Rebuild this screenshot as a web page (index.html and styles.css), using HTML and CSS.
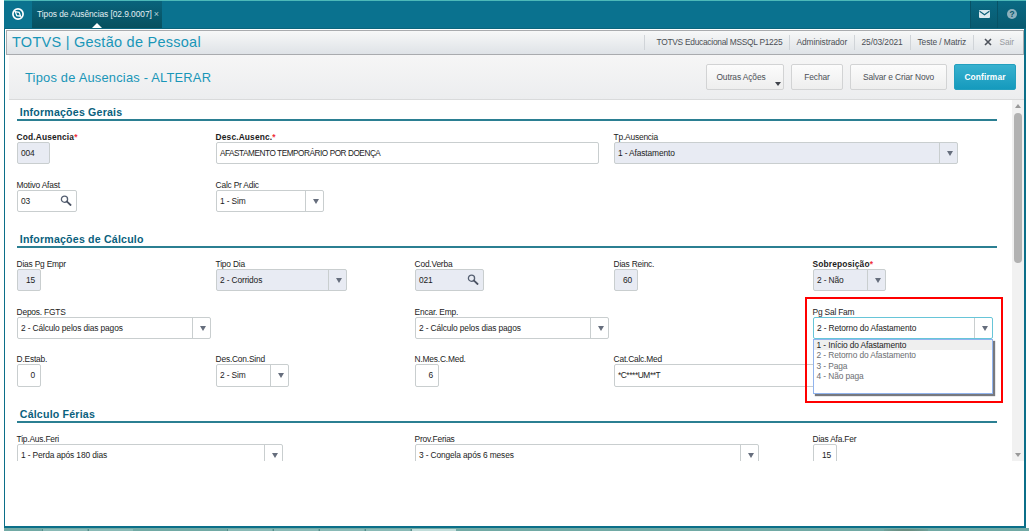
FILE: index.html
```html
<!DOCTYPE html>
<html lang="pt-BR">
<head>
<meta charset="utf-8">
<title>TOTVS | Gestão de Pessoal</title>
<link rel="stylesheet" href="styles.css">
</head>
<body>
<svg class="defs" width="0" height="0">
  <symbol id="lens" viewBox="0 0 12 12"><circle cx="4.5" cy="4.2" r="3.1" fill="none" stroke="#566072" stroke-width="1.3"/><path d="M7 6.7 10.6 10" stroke="#4a5263" stroke-width="1.8" stroke-linecap="round"/></symbol>
</svg>
<div class="window">
  <header class="topbar">
    <div class="logo"><svg width="14" height="14" viewBox="0 0 14 14"><circle cx="7" cy="7" r="5.1" fill="none" stroke="#fff" stroke-width="1.7"/><path d="M4.2 4.6 8.2 5.3 9.6 9.2 5.8 8.7Z" fill="none" stroke="#fff" stroke-width="1.2"/></svg></div>
    <div class="tab"><span class="t-tab">Tipos de Ausências [02.9.0007]</span><span class="tab-x">×</span><i class="tab-mark"></i></div>
    <div class="spacer"></div>
    <div class="tool mail"><svg width="11" height="8" viewBox="0 0 11 8"><rect width="11" height="8" rx="1" fill="#d9e9ee"/><path d="M.6 1.3 5.5 4.7 10.4 1.3" fill="none" stroke="#0a5f78" stroke-width="1.2"/></svg></div>
    <div class="tool help"><span>?</span></div>
  </header>
  <div class="titlebar">
    <h1>TOTVS | Gestão de Pessoal</h1>
    <div class="spacer"></div>
    <span class="info i1">TOTVS Educacional MSSQL P1225</span>
    <span class="info i2">Administrador</span>
    <span class="info i3">25/03/2021</span>
    <span class="info i4">Teste / Matriz</span>
    <span class="info i5"><svg width="8" height="8" viewBox="0 0 8 8"><path d="M1 1 7 7M7 1 1 7" stroke="#4d525b" stroke-width="1.6"/></svg><em>Sair</em></span>
  </div>
  <div class="actions">
    <h2>Tipos de Ausencias - ALTERAR</h2>
    <div class="spacer"></div>
    <button class="btn b1">Outras Ações<i></i></button>
    <button class="btn b2">Fechar</button>
    <button class="btn b3">Salvar e Criar Novo</button>
    <button class="btn primary">Confirmar</button>
  </div>
  <div class="content">
    <main class="form">
      <h3 class="first">Informações Gerais</h3>
      <div class="rows">
        <div class="field c1"><label class="req">Cod.Ausencia<b>*</b></label><div class="box off w34">004</div></div>
        <div class="field c2"><label class="req">Desc.Ausenc.<b>*</b></label><div class="box w384 caps">AFASTAMENTO TEMPORÁRIO POR DOENÇA</div></div>
        <div class="field c4"><label>Tp.Ausencia</label><div class="box off sel w345">1 - Afastamento</div></div>
        <div class="field c1"><label>Motivo Afast</label><div class="box w61 look">03<svg width="12" height="12"><use href="#lens"/></svg></div></div>
        <div class="field c2"><label>Calc Pr Adic</label><div class="box sel w109">1 - Sim</div></div>
      </div>
      <h3>Informações de Cálculo</h3>
      <div class="rows">
        <div class="field c1"><label>Dias Pg Empr</label><div class="box off num w25">15</div></div>
        <div class="field c2"><label>Tipo Dia</label><div class="box off sel w132">2 - Corridos</div></div>
        <div class="field c3"><label>Cod.Verba</label><div class="box off look w70">021<svg width="12" height="12"><use href="#lens"/></svg></div></div>
        <div class="field c4"><label>Dias Reinc.</label><div class="box off num w25">60</div></div>
        <div class="field c5"><label class="req">Sobreposição<b>*</b></label><div class="box off sel w73">2 - Não</div></div>
        <div class="field c1"><label>Depos. FGTS</label><div class="box sel w195">2 - Cálculo pelos dias pagos</div></div>
        <div class="field c3"><label>Encar. Emp.</label><div class="box sel w195">2 - Cálculo pelos dias pagos</div></div>
        <div class="field c5 open"><label>Pg Sal Fam</label><div class="box sel focus w181">2 - Retorno do Afastamento</div>
          <ul class="menu"><li class="cur">1 - Início do Afastamento</li><li>2 - Retorno do Afastamento</li><li>3 - Paga</li><li>4 - Não paga</li></ul>
          <div class="frame"></div>
        </div>
        <div class="field c1"><label>D.Estab.</label><div class="box num w25">0</div></div>
        <div class="field c2"><label>Des.Con.Sind</label><div class="box sel w73">2 - Sim</div></div>
        <div class="field c3"><label>N.Mes.C.Med.</label><div class="box num w25">6</div></div>
        <div class="field c4"><label>Cat.Calc.Med</label><div class="box w345 mask">*C****UM**T</div></div>
      </div>
      <h3>Cálculo Férias</h3>
      <div class="rows">
        <div class="field c1"><label>Tip.Aus.Feri</label><div class="box sel w267">1 - Perda após 180 dias</div></div>
        <div class="field c3"><label>Prov.Ferias</label><div class="box sel w345">3 - Congela após 6 meses</div></div>
        <div class="field c5"><label>Dias Afa.Fer</label><div class="box num w25">15</div></div>
      </div>
    </main>
    <div class="scroll"><i class="up"></i><i class="thumb"></i><i class="down"></i></div>
  </div>
</div>
<footer class="taskbar"><i class="k1"></i><i></i><i class="k3"></i><i></i><i></i><i></i><i class="lit"></i><i class="spot"></i></footer>
</body>
</html>
```
FILE: styles.css
```css
* { box-sizing: border-box; }
body { margin: 0; width: 1029px; height: 531px; overflow: hidden; background: #fff; font-family: "Liberation Sans", Arial, sans-serif; font-size: 8.4px; color: #1c1c1c; padding: 0 3px 0 4px; }
h1, h2, h3, ul { margin: 0; padding: 0; font-weight: normal; white-space: nowrap; }
.defs { position: absolute; }
.spacer { flex: 1; }
.window { height: 528px; border: solid #0b6f89; border-width: 0 2px 2px 1px; display: flex; flex-direction: column; }

.topbar { height: 29px; margin: 0 -2px 0 -1px; flex: none; display: flex; background: #0a728f; border-top: 1px solid #4db9b8; border-bottom: 1px solid #0b657d; }
.logo { width: 28px; display: flex; align-items: center; justify-content: center; }
.tab { position: relative; width: 130px; display: flex; align-items: center; padding: 0 0 2px 5px; color: #e3eff2; background: linear-gradient(#09637c, #07505f); white-space: nowrap; }
.logo, .tool { padding-bottom: 1px; }
.t-tab { letter-spacing: -.06px; }
.tab-x { margin-left: 2px; color: #b5d0d8; font-size: 9px; }
.tab-mark { position: absolute; left: 60px; bottom: 0; border: 5px solid transparent; border-top: 0; border-bottom: 5px solid #fff; }
.tool { width: 27px; display: flex; align-items: center; justify-content: center; background: linear-gradient(#096983, #085a70); border-left: 1px solid #075266; }
.help { width: 29px; }
.help span { width: 10px; height: 10px; border-radius: 50%; background: #8db1bd; color: #07566b; font-weight: bold; text-align: center; line-height: 10px; }

.titlebar { height: 25px; margin-top: 1px; margin-left: 1px; flex: none; display: flex; align-items: center; border: 1px solid #a9abae; background: linear-gradient(#f7f8f8, #dfe3e7); }
h1 { font-size: 14.5px; letter-spacing: .26px; color: #1996b8; padding: 0 0 2px 5px; }
.info { height: 15px; line-height: 15px; margin-bottom: 1px; color: #4b4f55; border-left: 1px solid #d0d4d8; white-space: nowrap; padding-left: 7px; letter-spacing: -.08px; }
.i1 { width: 145px; padding-left: 12px; letter-spacing: -.27px; }
.i2 { width: 65px; }
.i3 { width: 56px; }
.i4 { width: 63px; }
.i5 { width: 50.5px; display: flex; align-items: center; padding-left: 10px; }
.i5 em { font-style: normal; color: #979a9f; margin-left: 8px; }

.actions { height: 45px; flex: none; margin-left: 4px; display: flex; align-items: center; padding-right: 8px; background: linear-gradient(#f6f6f6, #ecedef); border-bottom: 1px solid #d9dadb; }
h2 { font-size: 12.9px; letter-spacing: .2px; color: #1996b8; padding-left: 16px; }
.btn { position: relative; height: 26px; margin: 0 0 0 7px; padding: 0; border: 1px solid #d2d3d4; border-radius: 2px; background: linear-gradient(#fcfcfc, #eee); font: 8.4px "Liberation Sans", Arial, sans-serif; letter-spacing: -.1px; color: #4b4f55; white-space: nowrap; }
.b1 { width: 78px; padding-right: 8px; }
.b1 i { position: absolute; right: 2px; bottom: 3px; border: 3.5px solid transparent; border-bottom: 0; border-top: 4px solid #3f434b; }
.b2 { width: 52px; }
.b3 { width: 97px; }
.primary { width: 62px; color: #fff; font-weight: bold; letter-spacing: .13px; background: linear-gradient(#38b1cf, #159abd); border-color: #239fbe; }

.content { display: flex; height: 361px; flex: none; overflow: hidden; }
.form { flex: 1; padding-left: 11.6px; }
h3 { width: 980px; height: 36px; padding: 21px 0 0 3.2px; border-bottom: 2px solid #2b7f92; font-size: 10.6px; line-height: 13px; font-weight: bold; color: #0a5f7d; letter-spacing: .2px; }
h3.first { height: 21px; padding-top: 6px; }
.rows { display: grid; grid-template-columns: repeat(5, 199px); row-gap: 14.3px; padding-top: 10px; }
.field { position: relative; height: 33.4px; }
.c1 { grid-column: 1; } .c2 { grid-column: 2; } .c3 { grid-column: 3; } .c4 { grid-column: 4; } .c5 { grid-column: 5; }
label { display: block; height: 11px; line-height: 12px; white-space: nowrap; letter-spacing: -.2px; }
.req { font-weight: bold; letter-spacing: .14px; }
.req b { color: #f0303c; }
.box { position: relative; height: 22.4px; line-height: 21px; border: 1px solid #c9cecf; border-radius: 2px; padding-left: 3.3px; background: #fff; white-space: nowrap; letter-spacing: -.12px; }
.off { background: #e8ebf3; }
.num { text-align: right; padding-right: 5px; }
.caps { letter-spacing: -.43px; font-size: 8.2px; }
.mask { letter-spacing: -.42px; }
.look { display: flex; justify-content: space-between; padding-right: 4px; }
.look svg { margin-top: 4px; }
.sel { display: flex; justify-content: space-between; }
.sel::after { content: ""; width: 17px; height: 100%; border-left: 1px solid #c9cecf; }
.sel::before { content: ""; position: absolute; right: 4px; top: 8px; border: 3px solid transparent; border-bottom: 0; border-top: 5px solid #666e7d; }
.w25 { width: 24.5px; } .w34 { width: 33.5px; } .w61 { width: 60px; } .w70 { width: 69.5px; } .w73 { width: 73px; } .w109 { width: 108px; } .w132 { width: 131px; } .w181 { width: 180px; } .w195 { width: 194px; } .w267 { width: 266px; } .w345 { width: 344px; } .w384 { width: 383px; }
.focus { border-color: #67c5d8; }
.open { z-index: 2; }
.menu { position: absolute; left: 0; top: 33px; width: 180.5px; height: 55px; list-style: none; background: #fff; border: 1px solid #91b4ee; box-shadow: 2px 2px 1px #77797e; padding-top: 0; color: #6c6e72; letter-spacing: -.12px; }
.menu li { height: 10.5px; line-height: 10.5px; padding-left: 3px; }
.menu .cur { background: #efefef; color: #1c1c1c; }
.frame { position: absolute; left: -7.6px; top: -9px; width: 198px; height: 106px; border: 2px solid #f00; }

.scroll { width: 12px; margin-right: 1px; flex: none; display: flex; flex-direction: column; align-items: center; background: #f1f1f1; }
.up, .down { border: 3px solid transparent; }
.up { margin-top: 4px; border-top: 0; border-bottom: 4px solid #999; }
.thumb { margin-top: 5px; width: 8px; height: 150px; border-radius: 4px; background: #b2b2b2; }
.down { margin-top: auto; margin-bottom: 4px; border-bottom: 0; border-top: 4px solid #999; }

.taskbar { position: relative; height: 3px; display: flex; gap: 1px; padding-left: 38px; margin-right: -3px; background: #72aaa5; }
.taskbar i { width: 45px; height: 2px; margin-top: 1px; background: #8abab6; border-left: 1px solid #568e8b; }
.taskbar .k3 { margin-left: 93px; }
.taskbar .lit { background: #c2ddda; }
.taskbar .spot { position: absolute; left: 880px; width: 44px; border: 0; background: radial-gradient(#68806f, transparent); }
```
